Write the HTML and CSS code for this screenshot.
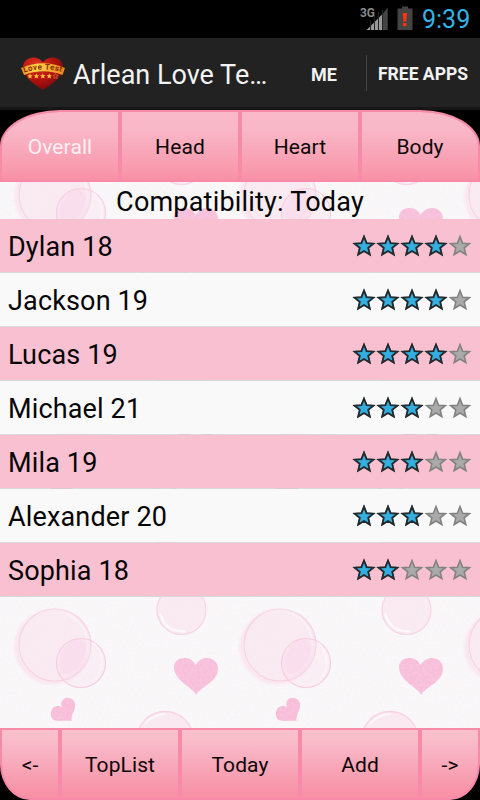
FILE: index.html
```
<!DOCTYPE html>
<html lang="en">
<head>
<meta charset="utf-8">
<title>Arlean Love Test</title>
<link rel="stylesheet" href="styles.css">
</head>
<body>
<svg class="defs" width="0" height="0">
  <defs>
    <symbol id="star" viewBox="0 0 24 24"><path d="M12 2.600 14.600 9.200 21.400 9.700 16.200 13.900 17.800 20.500 12 17 6.200 20.500 7.800 13.900 2.600 9.700 9.400 9.200Z"/></symbol>
    <symbol id="stars5" viewBox="0 0 120 24">
      <use href="#star" x="0" width="24" height="24"/><use href="#star" x="24" width="24" height="24"/><use href="#star" x="48" width="24" height="24"/><use href="#star" x="72" width="24" height="24"/><use href="#star" x="96" width="24" height="24"/>
    </symbol>
  </defs>
</svg>
<div class="app">
  <header class="status">
    <svg width="60" height="38" viewBox="0 0 60 38">
      <text class="net" x="0" y="17" textLength="15" lengthAdjust="spacingAndGlyphs">3G</text>
      <path d="M6.500 30 22 14.500V30Z" fill="#9a9a9a"/>
      <path d="M23 13.500 27.700 7.500V30H23Z" fill="#454545"/>
      <path d="M10.500 20v10M14.500 16v14M18.500 12v18M22.500 10v20" stroke="#222"/>
      <path d="M38 8.500h4v-2h6v2h4.500V30H37.500V8.500Z" fill="#444"/>
      <path d="M42.700 13h4.300l-.7 8.500h-2.900ZM43 23h3.500v3H43Z" fill="#ff3312"/>
    </svg>
    <span class="clock">9:39</span>
  </header>
  <div class="actionbar">
    <svg class="logo" width="46" height="36" viewBox="0 0 46 36">
      <defs>
        <radialGradient id="hg" cx=".35" cy=".25" r=".8"><stop offset="0" stop-color="#e03424"/><stop offset=".5" stop-color="#b81410"/><stop offset="1" stop-color="#74080a"/></radialGradient>
        <linearGradient id="rib"><stop offset="0" stop-color="#ee9420"/><stop offset=".35" stop-color="#ffd84a"/><stop offset="1" stop-color="#ef8418"/></linearGradient>
        <path id="arc" d="M4 17.500Q23 11.500 43 17.500"/>
      </defs>
      <path d="M23 35C15 30 3 22 3 12.500 3 5 9 2.500 13.500 2.500 18 2.500 21.500 5 23 7.500 24.500 5 28 2.500 33 2.500 38 2.500 43 6 43 12.500 43 22 31 30 23 35Z" fill="url(#hg)"/>
      <path d="M1 13Q23 3.500 45 13L42.500 20Q23 12.500 4 20Z" fill="url(#rib)"/>
      <text class="ribbon"><textPath href="#arc" textLength="38">Love Test</textPath></text>
      <g fill="#ffc53c"><use href="#star" x="6.500" y="17.500" width="7" height="7"/><use href="#star" x="12.900" y="17.500" width="7" height="7"/><use href="#star" x="19.300" y="17.500" width="7" height="7"/><use href="#star" x="25.700" y="17.500" width="7" height="7"/></g>
      <use href="#star" x="32" y="17.500" width="7" height="7" fill="#a01810" stroke="#e08020" stroke-width="2"/>
    </svg>
    <h1 class="title">Arlean Love Te…</h1>
    <span class="action me">ME</span>
    <span class="action free">FREE APPS</span>
  </div>
  <nav class="tabs">
    <div class="btn active">Overall</div><div class="btn">Head</div><div class="btn">Heart</div><div class="btn">Body</div>
  </nav>
  <main class="content">
    <svg class="wallpaper" width="480" height="546">
      <defs>
        <filter id="grain" x="0" y="0" width="100%" height="100%"><feTurbulence type="fractalNoise" baseFrequency=".4" numOctaves="2" seed="3"/><feColorMatrix values="0 0 0 0 .97  0 0 0 0 .78  0 0 0 0 .87  1.200 0 0 0 -.5"/></filter>
        <filter id="soft"><feGaussianBlur stdDeviation="1.600"/></filter>
        <pattern id="tile" x="0" y="190" width="225" height="225" patternUnits="userSpaceOnUse">
          <g transform="translate(0 -597)">
            <circle cx="52" cy="647" r="35" fill="none" stroke="#fae6ef" stroke-width="5" filter="url(#soft)"/>
            <circle cx="55" cy="645" r="36" fill="#f9ebf1" stroke="#f8d2e1" stroke-width="1.200"/>
            <path d="M67 614A33 33 0 0 1 64 676" fill="none" stroke="#fbf5f8" stroke-width="1.500"/>
            <circle cx="81" cy="663" r="24.500" fill="#f9dcec" fill-opacity=".3" stroke="#f8cce0" stroke-width="1.200"/>
            <ellipse cx="73" cy="657" rx="12" ry="19" transform="rotate(25 73 657)" fill="#f9c8e4" opacity=".3" filter="url(#soft)"/>
            <path d="M94 643Q109 662 95 680" fill="none" stroke="#fcf6f9" stroke-width="1.500"/>
            <circle cx="181.500" cy="610" r="24.500" fill="#f9ebf1" stroke="#f8d2e1" stroke-width="1.200"/>
            <path d="M160 613Q165 633 186 631" fill="none" stroke="#fdfafb" stroke-width="2.500"/>
            <circle cx="165" cy="740" r="28.500" fill="#f9e9f0" stroke="#f8d2e1" stroke-width="1.300"/>
            <path d="M145 724Q152 715 165 714" fill="none" stroke="#fdfafb" stroke-width="2"/>
            <path d="M196 695C194 688 174 681 174 667 174 662 178 658 184 658 190 658 193 660 195.500 665 199 660 202 658 207 658 213 658 218 662 218 669 218 682 200 687 196 695Z" fill="#f8bfdb"/>
            <path d="M71.500 721C66 720 59 722 54 720 50 718 50 711 53 708 56 705 60 706 62 707 60 703 62 699 66 698 71 697 76 701 75 706 75 711 71 714 71.500 721Z" fill="#f8bdd9"/>
          </g>
        </pattern>
      </defs>
      <rect width="480" height="546" fill="#f9f8f9"/>
      <rect width="480" height="546" fill="url(#tile)"/>
      <rect width="480" height="546" filter="url(#grain)" opacity=".5"/>
    </svg>
    <div class="list">
      <h2 class="heading">Compatibility: Today</h2>
      <div class="row"><span>Dylan 18</span><svg class="stars s4" width="120" height="24"><use class="off" href="#stars5"/><use class="on" href="#stars5"/></svg></div>
      <div class="row"><span>Jackson 19</span><svg class="stars s4" width="120" height="24"><use class="off" href="#stars5"/><use class="on" href="#stars5"/></svg></div>
      <div class="row"><span>Lucas 19</span><svg class="stars s4" width="120" height="24"><use class="off" href="#stars5"/><use class="on" href="#stars5"/></svg></div>
      <div class="row"><span>Michael 21</span><svg class="stars s3" width="120" height="24"><use class="off" href="#stars5"/><use class="on" href="#stars5"/></svg></div>
      <div class="row"><span>Mila 19</span><svg class="stars s3" width="120" height="24"><use class="off" href="#stars5"/><use class="on" href="#stars5"/></svg></div>
      <div class="row"><span>Alexander 20</span><svg class="stars s3" width="120" height="24"><use class="off" href="#stars5"/><use class="on" href="#stars5"/></svg></div>
      <div class="row"><span>Sophia 18</span><svg class="stars s2" width="120" height="24"><use class="off" href="#stars5"/><use class="on" href="#stars5"/></svg></div>
    </div>
  </main>
  <nav class="toolbar">
    <div class="btn">&lt;-</div><div class="btn">TopList</div><div class="btn">Today</div><div class="btn">Add</div><div class="btn">-&gt;</div>
  </nav>
</div>
</body>
</html>
```
FILE: styles.css
```
* { box-sizing: border-box; }
body { margin: 0; background: #000; font-family: Roboto, sans-serif; }
.defs { display: block; position: absolute; }
.app { width: 480px; height: 800px; display: grid; grid-template-rows: 38px 72px 72px 546px 72px; overflow: hidden; }
.status { display: flex; justify-content: flex-end; align-items: center; padding-right: 9px; background: #000; }
.net { font: bold 13px Roboto, sans-serif; fill: #8a8a8a; }
.clock { margin-left: 2px; width: 49px; padding-top: 2px; color: #33b5e5; font-size: 25px; line-height: 38px; white-space: nowrap; }
.status svg { margin-right: 0; }
.actionbar { display: flex; align-items: center; background: #222; border-bottom: 3px solid #161616; color: #f3f3f3; white-space: nowrap; }
.logo { margin-left: 20px; }
.ribbon { font: bold 8px Roboto, sans-serif; fill: #8c2a08; }
.title { margin: 0 0 0 7px; padding-top: 4px; width: 209px; font-size: 27px; font-weight: 400; }
.action { font-size: 18px; font-weight: 700; display: flex; align-items: center; justify-content: center; height: 36px; padding-top: 3px; }
.me { width: 84px; }
.free { flex: 1; font-size: 17.5px; background: linear-gradient(#444, #444) left / 1px 100% no-repeat; }
.tabs { display: grid; grid-template-columns: repeat(4, 120px); }
.toolbar { display: grid; grid-template-columns: 60px 120px 120px 120px 60px; }
.btn {
  display: flex; align-items: center; justify-content: center; padding-top: 2px;
  border: 2px solid #f88aa9; color: #0c0808; font-size: 21px; letter-spacing: .1px;
  background: linear-gradient(#f9b9c9 0, #f9b7c7 18px, #f8b0c1 28px, #f8a8ba 38px, #f8a0b3 48px, #f899ad 58px, #f890a6 68px) padding-box, #f88aa9;
}
.toolbar .btn { background: linear-gradient(#f9c1cc 0, #f9b9c8 15px, #f8b0c1 25px, #f8a8ba 35px, #f8a0b3 45px, #f898ad 55px, #f890a6 66px) padding-box, #f88aa9; }
.tabs .btn:first-child { border-top-left-radius: 60px 36px; }
.tabs .btn:last-child { border-top-right-radius: 60px 36px; }
.toolbar .btn:first-child { border-bottom-left-radius: 30px 36px; }
.toolbar .btn:last-child { border-bottom-right-radius: 30px 36px; }
.tabs .active { color: #fff0f3; }
.content { display: grid; }
.wallpaper, .list { grid-area: 1 / 1; }
.list { z-index: 1; color: #060606; }
.heading { margin: 0; height: 37px; line-height: 40px; font-size: 27px; font-weight: 400; text-align: center; letter-spacing: .2px; }
.row { height: 54px; padding: 0 8px; display: flex; align-items: center; justify-content: space-between; font-size: 27px; letter-spacing: .15px; background: #f9f9f9 padding-box; border-bottom: 1px solid rgba(205, 205, 205, .7); }
.row span { padding-top: 3px; }
.row:nth-child(even) { background-color: #f9c0d1; }
.off { fill: #aaa; stroke: #828282; stroke-width: 1.6; }
.on { fill: #33aede; stroke: #22282c; stroke-width: 1.8; }
.s4 .on { clip-path: inset(0 24px 0 0); }
.s3 .on { clip-path: inset(0 48px 0 0); }
.s2 .on { clip-path: inset(0 72px 0 0); }
```
